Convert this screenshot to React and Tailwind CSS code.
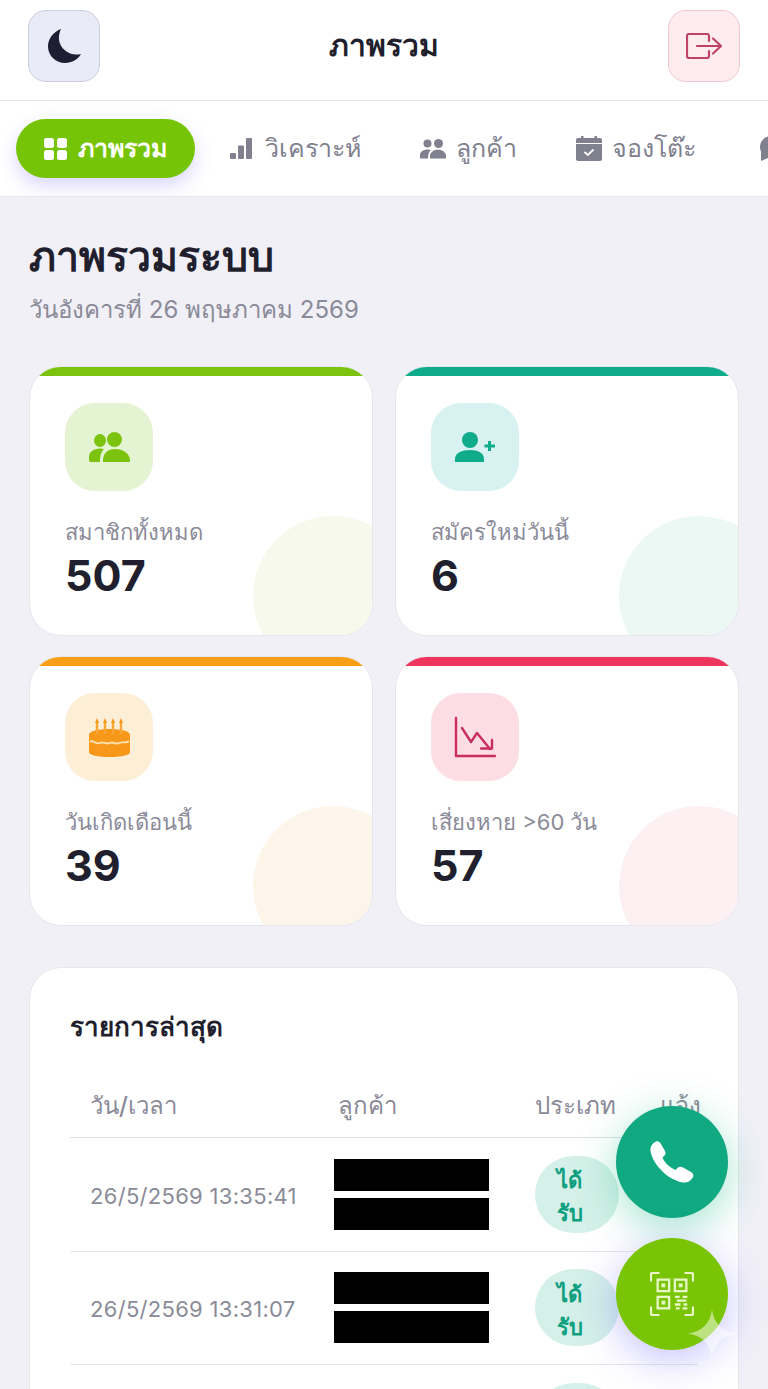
import React from "react";

const font = "font-['Inter','Noto_Sans','Liberation_Sans',sans-serif]";

function MoonIcon() {
  return (
    <svg viewBox="0 0 33 34" className="w-[33px] h-[34px]">
      <path d="M13 0C5 3 0 10 0 17.500C0 27 8 34 17 34C24 34 30 30.500 33 25C22 27.500 12.500 20.500 11 11C10.500 7 11.500 3 13 0Z" fill="#1e1e32" />
    </svg>
  );
}

function ExitIcon() {
  return (
    <svg viewBox="0 0 36 26" className="w-[36px] h-[26px]" fill="none" stroke="#bd4465" strokeWidth="2.200" strokeLinecap="round" strokeLinejoin="round">
      <path d="M23 8V3A2 2 0 0 0 21 1H3A2 2 0 0 0 1 3V23A2 2 0 0 0 3 25H21A2 2 0 0 0 23 23V18" />
      <path d="M11 13H35M27 5.500L35 13L27 20.500" />
    </svg>
  );
}

function GridIcon() {
  return (
    <svg viewBox="0 0 24 24" className="w-6 h-6" fill="#fff">
      <rect x="0" y="1" width="10" height="10" rx="2.500" />
      <rect x="13" y="1" width="10" height="10" rx="2.500" />
      <rect x="0" y="13" width="10" height="10" rx="2.500" />
      <rect x="13" y="13" width="10" height="10" rx="2.500" />
    </svg>
  );
}

function BarsIcon() {
  return (
    <svg viewBox="0 0 22 21" className="w-[22px] h-[21px] mr-[3px]" fill="#80808f">
      <rect x="0" y="15" width="6" height="6" rx="1" />
      <rect x="8" y="7.500" width="6" height="13.500" rx="1" />
      <rect x="16" y="0" width="6" height="21" rx="1" />
    </svg>
  );
}

function SmallPeopleIcon() {
  return (
    <svg viewBox="0 0 26 20" className="w-[26px] h-[20px]" fill="#80808f">
      <circle cx="7.500" cy="4.500" r="4" />
      <circle cx="18.500" cy="4.500" r="4.500" />
      <path d="M0 19V16C0 13 3 10.500 7.500 10.500C9 10.500 10 10.800 11 11.200C9 12.800 8 15 8 19.500H1A1 1 0 0 1 0 19Z" />
      <path d="M10 19.500V17C10 13.500 13.500 10.500 18 10.500C22.500 10.500 26 13.500 26 17V19.500Z" />
    </svg>
  );
}

function CalendarIcon() {
  return (
    <svg viewBox="0 0 26 25" className="w-[26px] h-[25px]" fill="#80808f">
      <rect x="5" y="0" width="2.500" height="4" />
      <rect x="18.500" y="0" width="2.500" height="4" />
      <path d="M0 7V4A2 2 0 0 1 2 2H24A2 2 0 0 1 26 4V7Z" />
      <path d="M0 8H26V23A2 2 0 0 1 24 25H2A2 2 0 0 1 0 23Z" />
      <path d="M8.500 16L11.800 19L17.500 13.500" fill="none" stroke="#fff" strokeWidth="1.800" />
    </svg>
  );
}

function ChatIcon() {
  return (
    <svg viewBox="0 0 26 25" className="w-[26px] h-[25px] ml-[3px]" fill="#80808f">
      <circle cx="13" cy="11" r="11" />
      <path d="M3 16L3 25L12 21Z" />
    </svg>
  );
}

function TabItem({ icon, label, active }) {
  return (
    <div className={`flex items-center shrink-0 h-[59px] rounded-[30px] text-[25px] gap-[10px] ${active ? "px-[28px] mr-[3px] bg-[#76c406] text-white font-semibold shadow-[0_8px_18px_rgba(110,100,240,0.25)]" : "px-[27px] text-[#80808f] font-medium"}`}>
      {icon}
      {label ? <span>{label}</span> : null}
    </div>
  );
}

function UsersIcon() {
  return (
    <svg viewBox="0 0 41 30" className="w-[41px] h-[30px]" fill="#7cc30f">
      <ellipse cx="11" cy="8.500" rx="6" ry="6.500" />
      <ellipse cx="25.500" cy="7.500" rx="7.500" ry="7.500" />
      <path d="M0 28V25C0 20 5 16.500 11 16.500C12.500 16.500 14 16.800 15 17.200C12 20 11 24 11 30H2A2 2 0 0 1 0 28Z" />
      <path d="M14 28.500C14 21.500 18.500 17 26 17C34 17 41 21.500 41 28.500V30H14Z" />
    </svg>
  );
}

function UserPlusIcon() {
  return (
    <svg viewBox="0 0 41 30" className="w-[41px] h-[30px]" fill="#10ab8b">
      <ellipse cx="15" cy="8" rx="8" ry="8" />
      <path d="M0 30V27C0 21 7 18 15 18C23 18 29 21 29 27V30Z" />
      <path d="M34.500 9V19M29.500 14H40" stroke="#10ab8b" strokeWidth="3" fill="none" />
    </svg>
  );
}

function ChartDownIcon() {
  return (
    <svg viewBox="0 0 42 42" className="w-[42px] h-[42px]" fill="none" stroke="#c92f5d" strokeWidth="2.400" strokeLinecap="round" strokeLinejoin="round">
      <path d="M2 2V40H41" />
      <path d="M8 12L17 26L23 17L36 33" />
      <path d="M38 24V32.500H27" />
    </svg>
  );
}

function CakeIcon() {
  return (
    <svg viewBox="0 0 41 39" className="w-[41px] h-[39px]" fill="#f7981a">
      <path d="M0 17C0 13 9 11 20.500 11C32 11 41 13 41 17V34C41 37.500 32 39 20.500 39C9 39 0 37.500 0 34Z" />
      <path d="M1 24C4 21 7 27 11 25C14 23 17 27 20.500 25C24 23 27 27 30 25C34 23 37 26 40 23" fill="none" stroke="#ffe2b0" strokeWidth="1.800" />
      <path d="M8 4V16M16 4V16M24 4V16M32 4V16" stroke="#f7a73a" strokeWidth="2.400" />
      <path d="M8 0L10 5H6ZM16 0L18 5H14ZM24 0L26 5H22ZM32 0L34 5H30Z" />
    </svg>
  );
}

function PhoneIcon() {
  return (
    <svg viewBox="0 0 44 42" className="w-[44px] h-[42px]" fill="#fff">
      <path d="M6 0.500C8 0 10 1 11 3L15 10C16 12 15.500 14 14 15L12.500 16.500C14 21 20 27 25.500 29L27.500 27C29 25.500 31 25.500 33 26.500L41 31C43.500 32.500 44 35 42.500 37C40 40.500 37 42 33 41.500C18 39 3 24 0.500 10C0 6 2 2.500 6 0.500Z" />
    </svg>
  );
}

function QrIcon() {
  return (
    <svg viewBox="0 0 46 46" className="w-[44px] h-[44px]" fill="none" stroke="#e9f7c8" strokeWidth="2.400">
      <path d="M1 10V3A2 2 0 0 1 3 1H10M36 1H43A2 2 0 0 1 45 3V10M1 36V43A2 2 0 0 0 3 45H10M36 45H43A2 2 0 0 0 45 43V36" />
      <rect x="8" y="8" width="12" height="12" />
      <rect x="26" y="8" width="12" height="12" />
      <rect x="8" y="26" width="12" height="12" />
      <rect x="12.500" y="12.500" width="3" height="3" fill="#e9f7c8" strokeWidth="1" />
      <rect x="30.500" y="12.500" width="3" height="3" fill="#e9f7c8" strokeWidth="1" />
      <rect x="12.500" y="30.500" width="3" height="3" fill="#e9f7c8" strokeWidth="1" />
      <path d="M26 26H31M34 26H39M28 30H38M26 34H32M35 34H39M27 38H31M34 38H39" />
    </svg>
  );
}

function StatCard({ bar, tint, circle, icon, label, value }) {
  return (
    <div className="relative overflow-hidden h-[270px] bg-white rounded-[32px] border border-[#e6e6ee] pt-[36px] px-[35px]">
      <div className={`absolute top-0 left-0 right-0 h-[9px] ${bar}`} />
      <div className={`absolute right-[-41px] bottom-[-41px] w-[160px] h-[160px] rounded-full ${circle}`} />
      <div className={`relative flex items-center justify-center w-[88px] h-[88px] rounded-[30px] ${tint}`}>{icon}</div>
      <div className="relative mt-[23px] text-[22px] leading-[36px] text-[#8a8a98]">{label}</div>
      <div className="relative text-[43px] leading-[50px] font-bold text-[#1f1f2e]">{value}</div>
    </div>
  );
}

function Row({ time, last }) {
  return (
    <div className={`grid grid-cols-[244px_201px_84px] items-center h-[113.500px] pl-[20px] ${last ? "" : "border-b border-[#e7e7ee]"}`}>
      <div className="mt-[4px] text-[22px] text-[#8a8a98] tracking-[0.3px]">{time}</div>
      <div className="flex flex-col gap-[7px]">
        {time ? <div className="w-[155px] h-[32px] bg-black" /> : null}
        {time ? <div className="w-[155px] h-[32px] bg-black" /> : null}
      </div>
      <div className="flex flex-col items-start justify-center w-[84px] h-[77px] rounded-full bg-[#d4f0e8] pl-[22px] pt-[6px] text-[#0f9f80] text-[22px] leading-[33px] font-semibold">
        {time ? <span>ได้</span> : null}
        {time ? <span>รับ</span> : null}
      </div>
    </div>
  );
}

export default function App() {
  return (
    <div className={`relative h-screen overflow-hidden bg-[#f1f0f7] ${font}`}>
      <header className="flex items-center justify-between h-[101px] px-[28px] pb-[9px] bg-white border-b border-[#e5e5ec]">
        <button className="flex items-center justify-center w-[72px] h-[72px] rounded-[18px] bg-[#e9ebf7] border border-[#c9cbe0]"><MoonIcon /></button>
        <h1 className="text-[30px] font-bold text-[#1f1f2e]">ภาพรวม</h1>
        <button className="flex items-center justify-center w-[72px] h-[72px] rounded-[18px] bg-[#ffecef] border border-[#f2c6d0]"><ExitIcon /></button>
      </header>

      <nav className="flex items-center gap-[5px] h-[96px] pl-[16px] bg-white border-b border-[#e5e5ec] overflow-hidden">
        <TabItem active icon={<GridIcon />} label="ภาพรวม" />
        <TabItem icon={<BarsIcon />} label="วิเคราะห์" />
        <TabItem icon={<SmallPeopleIcon />} label="ลูกค้า" />
        <TabItem icon={<CalendarIcon />} label="จองโต๊ะ" />
        <TabItem icon={<ChatIcon />} />
      </nav>

      <main className="px-[29px] pt-[34px]">
        <h2 className="text-[41px] leading-[50px] font-bold text-[#1f1f2e]">ภาพรวมระบบ</h2>
        <p className="mt-[11px] text-[24px] leading-[36px] text-[#8a8a98]">วันอังคารที่ 26 พฤษภาคม 2569</p>

        <div className="grid grid-cols-2 gap-x-[22px] gap-y-[20px] mt-[38px]">
          <StatCard bar="bg-[#7cc30f]" tint="bg-[#e4f3d2]" circle="bg-[#f6f9ec]" icon={<UsersIcon />} label="สมาชิกทั้งหมด" value="507" />
          <StatCard bar="bg-[#10ab8b]" tint="bg-[#d8f2f1]" circle="bg-[#ebf8f4]" icon={<UserPlusIcon />} label="สมัครใหม่วันนี้" value="6" />
          <StatCard bar="bg-[#f89e17]" tint="bg-[#fdeed6]" circle="bg-[#fdf5ea]" icon={<CakeIcon />} label="วันเกิดเดือนนี้" value="39" />
          <StatCard bar="bg-[#ee355e]" tint="bg-[#fddde4]" circle="bg-[#fdf0f3]" icon={<ChartDownIcon />} label="เสี่ยงหาย >60 วัน" value="57" />
        </div>

        <section className="mt-[41px] bg-white rounded-[32px] border border-[#e6e6ee] px-[40px] pt-[39px]">
          <h3 className="text-[26px] leading-[40px] font-bold text-[#1f1f2e]">รายการล่าสุด</h3>
          <div className="grid grid-cols-[248px_197px_125px_1fr] items-center h-[64px] mt-[27px] pl-[20px] border-b border-[#dcdce6] text-[24px] font-medium text-[#8a8a98]">
            <span>วัน/เวลา</span>
            <span>ลูกค้า</span>
            <span>ประเภท</span>
            <span>แจ้ง</span>
          </div>
          <Row time="26/5/2569 13:35:41" />
          <Row time="26/5/2569 13:31:07" />
          <Row last />
        </section>
      </main>

      <div className="fixed left-[616px] top-[1106px] flex flex-col gap-[20px]">
        <button className="flex items-center justify-center w-[112px] h-[112px] rounded-full bg-[#10a981] shadow-[0_10px_40px_rgba(16,185,129,0.38)]">
          <PhoneIcon />
        </button>
        <button className="flex items-center justify-center w-[112px] h-[112px] rounded-full bg-[#79c505] shadow-[0_10px_40px_rgba(90,80,250,0.35)]">
          <QrIcon />
        </button>
      </div>

      <svg viewBox="0 0 48 48" className="fixed left-[688px] top-[1309px] w-[48px] h-[49px]">
        <path d="M24 0C26 14 34 22 48 24C34 26 26 34 24 48C22 34 14 26 0 24C14 22 22 14 24 0Z" fill="rgba(255,255,255,0.5)" />
      </svg>
    </div>
  );
}
